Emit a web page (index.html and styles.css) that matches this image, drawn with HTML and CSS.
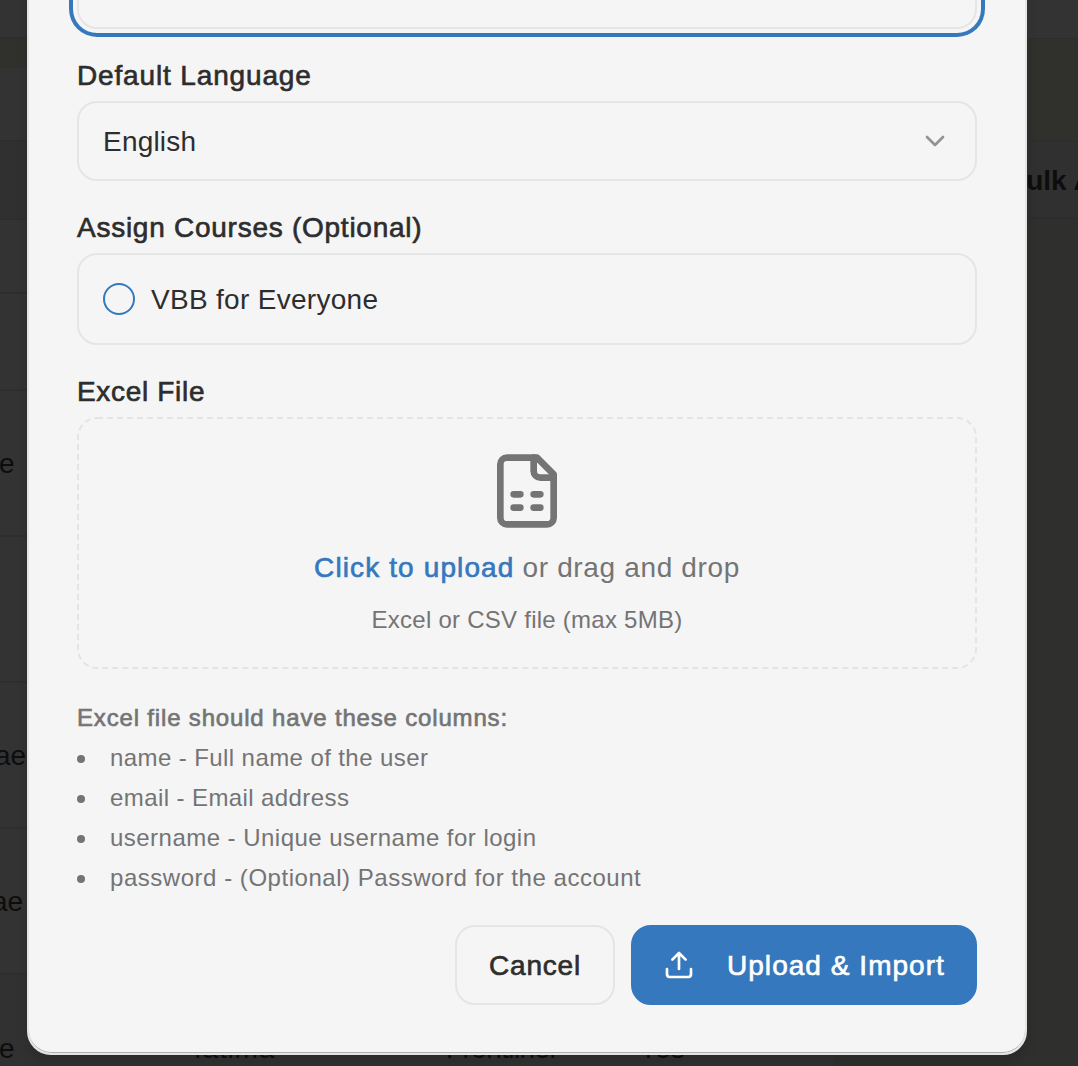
FILE: index.html
```html
<!DOCTYPE html>
<html lang="en">
<head>
<meta charset="utf-8">
<title>Bulk import users</title>
<link rel="stylesheet" href="styles.css">
</head>
<body>
<div class="screen">
  <div class="backdrop">
    <div class="bg-main">
      <div class="bg-row r-top"></div>
      <div class="bg-row r-band"></div>
      <div class="bg-row r-tools"></div>
      <div class="bg-row r-head"></div>
      <div class="bg-row r-sub"></div>
      <div class="bg-row r-first"></div>
      <div class="bg-row r-user"><span class="w-e">e</span></div>
      <div class="bg-row r-user"></div>
      <div class="bg-row r-user"><span class="w-ae1">ae</span></div>
      <div class="bg-row r-user"><span class="w-ae2">ae</span></div>
      <div class="bg-row r-user r-last"><span class="c-name">e</span><span class="c-user">fatima</span><span class="c-role">Frontliner</span><span class="c-yes">Yes</span></div>
    </div>
    <div class="bg-side">
      <div class="side-top"></div>
      <div class="side-band"></div>
      <div class="side-action">Bulk Actions</div>
      <div class="side-rest"></div>
    </div>
  </div>

  <div class="modal">
    <div class="focused"><div class="field prev-field"></div></div>
    <label class="label t-default">Default Language</label>
    <div class="field select">
      <span class="t-english">English</span>
      <svg class="chevron" viewBox="0 0 24 24"><path d="m6 9 6 6 6-6"/></svg>
    </div>
    <label class="label t-assign">Assign Courses (Optional)</label>
    <div class="field course">
      <span class="radio"></span>
      <span class="t-course">VBB for Everyone</span>
    </div>
    <label class="label t-excel">Excel File</label>
    <div class="drop">
      <svg class="dash" width="900" height="252"><rect x="1" y="1" width="898" height="250" rx="19"/></svg>
      <svg class="file" viewBox="0 0 24 24"><path d="M15 2H6a2 2 0 0 0-2 2v16a2 2 0 0 0 2 2h12a2 2 0 0 0 2-2V7Z"/><path d="M14 2v4a2 2 0 0 0 2 2h4"/><path d="M8 13h2M14 13h2M8 17h2M14 17h2"/></svg>
      <p class="drop-text"><span class="link">Click to upload</span><span class="t-drag">or drag and drop</span></p>
      <p class="drop-hint">Excel or CSV file (max 5MB)</p>
    </div>
    <p class="cols-title">Excel file should have these columns:</p>
    <ul class="cols">
      <li><span class="t-n">name - Full name of the user</span></li>
      <li><span class="t-n">email - Email address</span></li>
      <li><span class="t-u">username - Unique username for login</span></li>
      <li><span class="t-p">password - (Optional) Password for the account</span></li>
    </ul>
    <div class="actions">
      <button class="btn cancel">Cancel</button>
      <button class="btn primary"><svg viewBox="0 0 24 24"><path d="M21 15v4a2 2 0 0 1-2 2H5a2 2 0 0 1-2-2v-4"/><path d="m17 8-5-5-5 5M12 3v12"/></svg><span>Upload &amp; Import</span></button>
    </div>
  </div>
</div>
</body>
</html>
```
FILE: styles.css
```css
* { box-sizing: border-box; }
body {
  margin: 0;
  background: #333;
  font-family: "Liberation Sans", Arial, sans-serif;
  font-size: 28px;
  color: #2d2d2d;
}
p, ul { margin: 0; padding: 0; }
.screen { position: relative; width: 1078px; height: 1066px; overflow: hidden; }

/* dimmed page behind the dialog */
.backdrop { display: grid; grid-template-columns: 835px 1fr; height: 1066px; overflow: hidden; color: #0d0d0d; }
.bg-main { display: flex; flex-direction: column; }
.bg-row { flex: none; display: flex; align-items: center; border-bottom: 2px solid #2e2e2e; }
.r-top { height: 39px; }
.r-band { height: 29px; background: #30302d; border: 0; }
.r-tools { height: 74px; }
.r-head { height: 78px; background: #303030; }
.r-sub { height: 74px; }
.r-first { height: 97px; }
.r-user { height: 146px; padding-top: 2px; }
.r-last { height: 150px; padding: 0; background: #313131; }
.w-e { margin-left: -1px; }
.w-ae1 { margin-left: -5px; }
.w-ae2 { margin-left: -8px; }
.c-name { width: 195px; margin-left: -1px; }
.c-user { width: 252px; letter-spacing: .8px; }
.c-role { width: 193px; letter-spacing: -.6px; }
.r-last span:not(.c-name) { padding-bottom: 1px; }
.bg-side { background: #2f2f2d; }
.side-top { height: 39px; background: #333; border-bottom: 1px solid #2d2d2d; }
.side-band { height: 101px; background: #30302d; }
.side-action {
  height: 79px;
  padding: 0 0 0 171px;
  background: #303030;
  border-top: 2px solid #2e2e2e;
  border-bottom: 2px solid #2d2d2d;
  font-weight: bold;
  line-height: 78px;
  white-space: nowrap;
}

.modal {
  position: absolute;
  left: 27px;
  top: -40px;
  width: 1000px;
  height: 1095px;
  padding: 0 48px;
  border: 2px solid #e4e4e4;
  border-radius: 24px;
  background: #f5f5f5;
  box-shadow: inset 0 -1px 0 #aeb1b0, 0 8px 12px rgba(0, 0, 0, .12);
  display: flex;
  flex-direction: column;
}
.field { border: 2px solid #e5e5e5; border-radius: 20px; }
.focused {
  height: 75px;
  margin: 0 -8px;
  padding: 0 4px 4px;
  border: 4px solid #3578bd;
  border-top: 0;
  border-radius: 0 0 28px 28px;
}
.prev-field { height: 67px; border-top: 0; }

.label, .link, .cols-title, .btn { -webkit-text-stroke: .65px currentColor; }
.label { display: block; line-height: 40px; white-space: nowrap; }
.t-default { margin-top: 19px; letter-spacing: .85px; }
.t-assign { margin-top: 27px; letter-spacing: .74px; }
.t-excel { margin-top: 27px; letter-spacing: .68px; }

.select { height: 80px; margin-top: 5px; padding: 0 24px; display: flex; align-items: center; justify-content: space-between; }
.t-english { letter-spacing: .2px; padding-top: 2px; }
.chevron { width: 32px; height: 32px; fill: none; stroke: #939393; stroke-width: 2; stroke-linecap: round; stroke-linejoin: round; }
.course { height: 92px; margin-top: 5px; padding: 0 24px; display: flex; align-items: center; gap: 16px; }
.radio { width: 32px; height: 32px; border: 2px solid #3578bd; border-radius: 50%; }
.t-course { letter-spacing: .3px; padding-top: 2px; }

.drop {
  position: relative;
  height: 252px;
  margin-top: 5px;
  padding-top: 34px;
  display: flex;
  flex-direction: column;
  align-items: center;
  color: #747474;
}
.dash { position: absolute; inset: 0; fill: none; stroke: #e4e4e4; stroke-width: 2; stroke-dasharray: 6 4; }
.file { width: 80px; height: 80px; fill: none; stroke: #747474; stroke-width: 2; stroke-linecap: round; stroke-linejoin: round; }
.drop-text { margin-top: 17px; line-height: 40px; display: flex; gap: 8px; }
.link { color: #3578bd; letter-spacing: 1.12px; }
.t-drag { letter-spacing: .65px; }
.drop-hint { margin-top: 16px; font-size: 24px; line-height: 32px; letter-spacing: .25px; }

.cols-title { margin-top: 29px; font-size: 24px; line-height: 40px; letter-spacing: .83px; color: #747474; }
.cols { list-style: none; font-size: 24px; line-height: 40px; color: #747474; }
.cols li { display: flex; align-items: center; gap: 25px; }
.cols li::before { content: ""; width: 8px; height: 8px; border-radius: 50%; background: #747474; position: relative; top: 1px; }
.t-n { letter-spacing: .41px; }
.t-u { letter-spacing: .47px; }
.t-p { letter-spacing: .53px; }

.actions { margin-top: 27px; display: flex; justify-content: flex-end; gap: 16px; }
.btn {
  height: 80px;
  padding: 2px 0 0;
  border: 2px solid #e5e5e5;
  border-radius: 20px;
  background: none;
  font: 28px "Liberation Sans", Arial, sans-serif;
  color: #2d2d2d;
}
.cancel { width: 160px; letter-spacing: .8px; }
.primary {
  width: 346px;
  padding: 0 0 0 30px;
  border-color: #3578bd;
  background: #3578bd;
  color: #fff;
  display: flex;
  align-items: center;
  gap: 32px;
  letter-spacing: 1.04px;
}
.primary span { padding-top: 2px; }
.primary svg { width: 32px; height: 32px; fill: none; stroke: #fff; stroke-width: 2; stroke-linecap: round; stroke-linejoin: round; }
```
